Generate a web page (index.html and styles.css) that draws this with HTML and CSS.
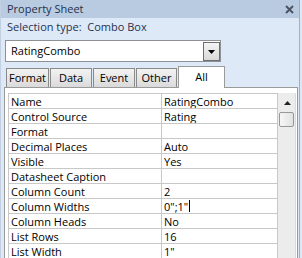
FILE: index.html
```html
<!DOCTYPE html>
<html>
<head>
<meta charset="utf-8">
<link rel="stylesheet" href="styles.css">
</head>
<body>
<div class="window">
  <div class="titlebar">
    <span class="title">Property Sheet</span>
    <svg class="close" width="9" height="9" viewBox="0 0 9 9"><path d="M1 1L8 8M8 1L1 8" stroke="#4b5563" stroke-width="2"/></svg>
  </div>
  <div class="seltype">Selection type:&nbsp; Combo Box</div>
  <div class="combo">
    <span class="combo-text">RatingCombo</span>
    <span class="combo-btn"><svg width="7" height="4" viewBox="0 0 7 4"><path d="M0 0H7L3.5 4Z" fill="#000"/></svg></span>
  </div>
  <div class="tabs">
    <div class="tab t-format">Format</div>
    <div class="tab t-data">Data</div>
    <div class="tab t-event">Event</div>
    <div class="tab t-other">Other</div>
    <div class="tab t-all active">All</div>
  </div>
  <div class="panel">
    <div class="grid">
      <table class="props">
        <tr><td class="k">Name</td><td class="v">RatingCombo</td></tr>
        <tr><td class="k">Control Source</td><td class="v">Rating</td></tr>
        <tr><td class="k">Format</td><td class="v"></td></tr>
        <tr><td class="k">Decimal Places</td><td class="v">Auto</td></tr>
        <tr><td class="k">Visible</td><td class="v">Yes</td></tr>
        <tr><td class="k">Datasheet Caption</td><td class="v"></td></tr>
        <tr><td class="k">Column Count</td><td class="v">2</td></tr>
        <tr><td class="k">Column Widths</td><td class="v">0";1"<span class="caret"></span></td></tr>
        <tr><td class="k">Column Heads</td><td class="v">No</td></tr>
        <tr><td class="k">List Rows</td><td class="v">16</td></tr>
        <tr><td class="k">List Width</td><td class="v">1"</td></tr>
      </table>
      <div class="scrollbar">
        <div class="sb-up"><svg width="7" height="4" viewBox="0 0 7 4"><path d="M3.5 0L7 4H0Z" fill="#222"/></svg></div>
        <div class="sb-thumb"></div>
      </div>
    </div>
  </div>
</div>
</body>
</html>
```
FILE: styles.css
```css
html, body {
  margin: 0;
  padding: 0;
  background: #dde8f6;
}
body {
  font-family: "Open Sans", "Noto Sans", sans-serif;
  font-size: 11px;
  color: #000;
}
.window {
  width: 298px;
  height: 258px;
  border-left: 1px solid #c3d0e2;
  border-right: 1px solid #a4afbd;
  background: #dee9f8;
  overflow: hidden;
}
.titlebar {
  height: 18px;
  background: #b9cbe1;
  display: flex;
  align-items: center;
  justify-content: space-between;
  padding: 0 5px 0 6px;
  color: #1f3250;
}
.title {
  line-height: 18px;
}
.close {
  display: block;
}
.seltype {
  height: 18px;
  line-height: 18px;
  padding-left: 6px;
  color: #1f3250;
}
.combo {
  box-sizing: border-box;
  margin: 4px 0 0 4px;
  width: 216px;
  height: 22px;
  border: 1px solid #8d9095;
  background: #fff;
  display: flex;
  align-items: flex-start;
}
.combo-text {
  flex: 1;
  padding-left: 5px;
  line-height: 20px;
}
.combo-btn {
  box-sizing: border-box;
  margin-top: 1px;
  width: 17px;
  height: 19px;
  border: 1px solid #6e6e6e;
  background: linear-gradient(#f4f4f4, #d9d9d9);
  display: flex;
  align-items: center;
  justify-content: center;
}
.combo-btn svg { display: block; }
.tabs {
  display: flex;
  align-items: flex-end;
  margin: 4px 0 0 5px;
  height: 21px;
  position: relative;
  z-index: 1;
}
.tab {
  box-sizing: border-box;
  height: 19px;
  margin-right: 1px;
  border: 1px solid #8a8a8a;
  border-bottom: none;
  background: linear-gradient(#f3f3f3, #dadada);
  text-align: center;
  line-height: 18px;
}
.t-format { width: 43px; }
.t-data { width: 42px; }
.t-event { width: 42px; }
.t-other { width: 41px; }
.t-all { width: 47px; }
.tab.active {
  height: 22px;
  margin-bottom: -1px;
  background: #fff;
  border-color: #9a9a9a;
  line-height: 20px;
}
.panel {
  box-sizing: border-box;
  margin-left: 3px;
  width: 294px;
  height: 200px;
  border: 1px solid #9a9a9a;
  background: #fff;
}
.grid {
  display: flex;
  padding: 5px 1px 0 3px;
  align-items: flex-start;
}
.props {
  border-collapse: collapse;
  width: 270px;
  table-layout: fixed;
}
.props tr {
  height: 15px;
}
.props td {
  border: 1px solid #c8c8c8;
  height: 14px;
  max-height: 14px;
  padding: 0 0 0 2px;
  line-height: 13px;
  white-space: nowrap;
  overflow: hidden;
  vertical-align: middle;
}
.props td.k { width: 150px; }
.caret {
  display: inline-block;
  width: 1px;
  height: 12px;
  background: #000;
  vertical-align: top;
  margin-left: 1px;
}
.scrollbar {
  width: 18px;
  height: 170px;
  background: #ececec;
  border-right: 1px solid #dadada;
  box-sizing: border-box;
  display: flex;
  flex-direction: column;
  align-items: center;
}
.sb-up {
  height: 19px;
  display: flex;
  align-items: center;
  justify-content: center;
  margin-left: 2px;
}
.sb-up svg { display: block; }
.sb-thumb {
  box-sizing: border-box;
  width: 15px;
  height: 15px;
  border: 1px solid #979797;
  border-radius: 2px;
  background: linear-gradient(90deg, #f7f7f7, #e1e1e1);
}
```
